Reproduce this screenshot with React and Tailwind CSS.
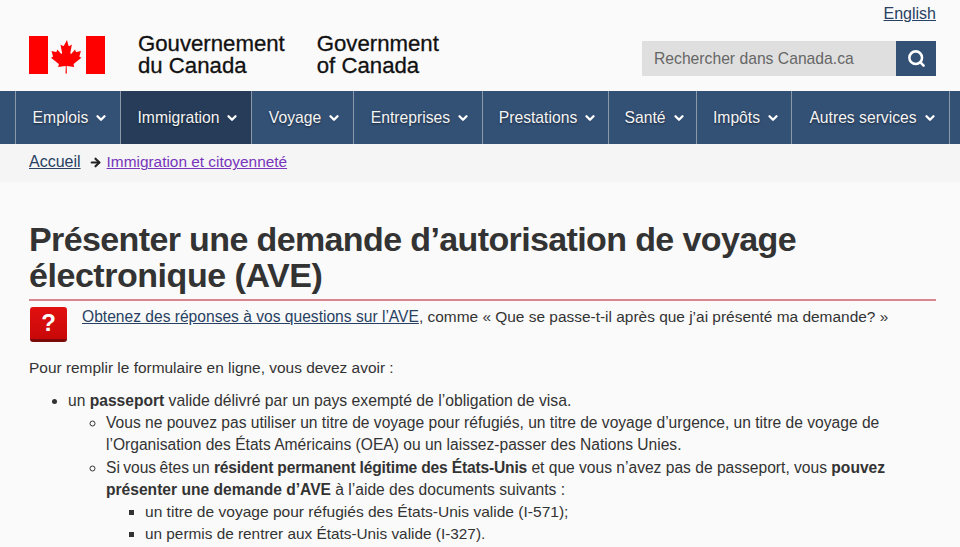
import React from 'react'
import { ChevronDown, Search, ArrowRight } from 'lucide-react'

const navItems = [
  { label: 'Emplois', width: 'w-[105px]' },
  { label: 'Immigration', width: 'w-[131px]', active: true },
  { label: 'Voyage', width: 'w-[102px]' },
  { label: 'Entreprises', width: 'w-[129px]' },
  { label: 'Prestations', width: 'w-[126px]' },
  { label: 'Santé', width: 'w-[88px]' },
  { label: 'Impôts', width: 'w-[95px]' },
  { label: 'Autres services', width: 'w-[158px]' },
]

const MapleFlag = () => (
  <svg viewBox="0 0 76 38" className="w-[76px] h-[38px] shrink-0">
    <rect x="0" y="0" width="19" height="38" fill="#ff0000" />
    <rect x="57" y="0" width="19" height="38" fill="#ff0000" />
    <path
      fill="#ff0000"
      d="M38 4l-3 5.5c-.4.6-1 .5-1.500.2l-2-1.100 1.500 8c.3 1.500-.7 1.500-1.200.9l-3.500-3.900-.6 2c-.1.300-.4.500-.8.500l-4.400-1 1.200 4.200c.2 1 .5 1.400-.2 1.700l-1.500.7 7.500 6.100c.3.200.4.600.3 1l-.7 2.100 7.200-.9c.3 0 .5.200.5.500l-.3 7h1.400l-.3-7c0-.3.200-.5.500-.5l7.200.9-.7-2.100c-.1-.4 0-.8.300-1l7.500-6.100-1.500-.7c-.7-.3-.4-.7-.2-1.700l1.200-4.200-4.400 1c-.4 0-.7-.2-.8-.5l-.6-2-3.500 3.900c-.5.600-1.500.600-1.200-.9l1.500-8-2 1.100c-.5.300-1.100.4-1.500-.2z"
    />
  </svg>
)

const App = () => {
  return (
    <div className="w-[960px] h-[547px] overflow-hidden bg-[#fafafa] text-[#333] font-['Liberation_Sans',Arial,sans-serif] text-[15.6px]">
      {/* 헤더 */}
      <header className="h-[91px] bg-[#fafafa] pl-[29px] pr-6 flex justify-between">
        <div className="flex items-start pt-[36px]">
          <MapleFlag />
          <div className="ml-[33px] -mt-[3px] text-[22.2px] leading-[22px] text-[#111] [-webkit-text-stroke:0.3px_#111]">
            Gouvernement<br />du Canada
          </div>
          <div className="ml-[32px] -mt-[3px] text-[22.2px] leading-[22px] text-[#111] [-webkit-text-stroke:0.3px_#111]">
            Government<br />of Canada
          </div>
        </div>
        <div className="flex flex-col items-end">
          <a href="#" className="mt-[5px] text-[16px] leading-[18px] text-[#284162] underline">English</a>
          <div className="mt-[18px] flex w-[294px] h-[35px]">
            <div className="flex-1 bg-[#dfdfdf] pl-[12px] leading-[35px] text-[15.7px] text-[#666]">Rechercher dans Canada.ca</div>
            <button className="w-[40px] bg-[#335075] flex items-center justify-center">
              <Search size={19} strokeWidth={3.2} className="text-white" />
            </button>
          </div>
        </div>
      </header>

      {/* 메뉴 */}
      <nav className="h-[53px] bg-[#335075] pl-[15px] flex">
        {navItems.map((item) => (
          <div
            key={item.label}
            className={`${item.width} flex items-center justify-center gap-[6px] pl-[5px] border-l border-l-[#8a98aa] text-[15.7px] text-[#f4f4f4] [text-shadow:0_1px_2px_#0008] ${item.active ? 'bg-[#263c59]' : ''}`}
          >
            <span>{item.label}</span>
            <ChevronDown size={14} strokeWidth={4} className="text-white" />
          </div>
        ))}
        <div className="w-px border-l border-l-[#8a98aa]" />
      </nav>

      {/* 브레드크럼 */}
      <div className="h-[38px] bg-[#f5f5f5] pl-[29px] flex items-center pb-[2px]">
        <a href="#" className="text-[16px] text-[#284162] underline">Accueil</a>
        <ArrowRight size={13} strokeWidth={4} className="ml-[8px] mr-[5px] text-[#222]" />
        <a href="#" className="text-[15.4px] text-[#7834bc] underline">Immigration et citoyenneté</a>
      </div>

      {/* 본문 */}
      <main className="pl-[29px] pr-6">
        <h1 className="mt-[39px] text-[34px] leading-[36px] tracking-[-0.62px] font-bold text-[#333] pb-[6px] border-b-2 border-b-[#d5878d]">
          Présenter une demande d’autorisation de voyage<br /><span className="tracking-[-0.46px]">électronique (AVE)</span>
        </h1>
        <div className="flex items-start mt-[6px]">
          <div className="w-[37px] h-[35px] ml-px rounded-[3px] bg-gradient-to-b from-[#e21010] to-[#c80808] border-b-[3px] border-b-[#7d0a0a] flex items-center justify-center text-white font-bold text-[24px] leading-none">
            ?
          </div>
          <p className="ml-[15px] leading-[22px] -mt-px text-[15.45px]">
            <a href="#" className="text-[15.6px] text-[#284162] underline">Obtenez des réponses à vos questions sur l’AVE</a>, comme « Que se passe-t-il après que j’ai présenté ma demande? »
          </p>
        </div>
        <p className="mt-[15px] leading-[22px] text-[15.45px]">Pour remplir le formulaire en ligne, vous devez avoir :</p>
        <ul className="mt-[11px] ml-[39px] list-disc leading-[22.2px]">
          <li>
            un <b>passeport</b> <span className="text-[15.75px]">valide délivré par un pays exempté de l’obligation de visa.</span>
            <ul className="ml-[38px] list-[circle]">
              <li>Vous ne pouvez pas utiliser un titre de voyage pour réfugiés, un titre de voyage d’urgence, un titre de voyage de l’Organisation des États Américains (OEA) ou un laissez-passer des Nations Unies.</li>
              <li>
                <span className="[word-spacing:-1px]">Si vous êtes un</span> <b className="tracking-[-0.18px]">résident permanent légitime des États-Unis</b> et que vous n’avez pas de passeport, vous <b>pouvez présenter une demande d’AVE</b> à l’aide des documents suivants :
                <ul className="ml-[39px] list-[square]">
                  <li className="text-[15.55px]">un titre de voyage pour réfugiés des États-Unis valide (I-571);</li>
                  <li className="text-[15.35px]">un permis de rentrer aux États-Unis valide (I-327).</li>
                </ul>
              </li>
            </ul>
          </li>
        </ul>
      </main>
    </div>
  )
}

export default App
